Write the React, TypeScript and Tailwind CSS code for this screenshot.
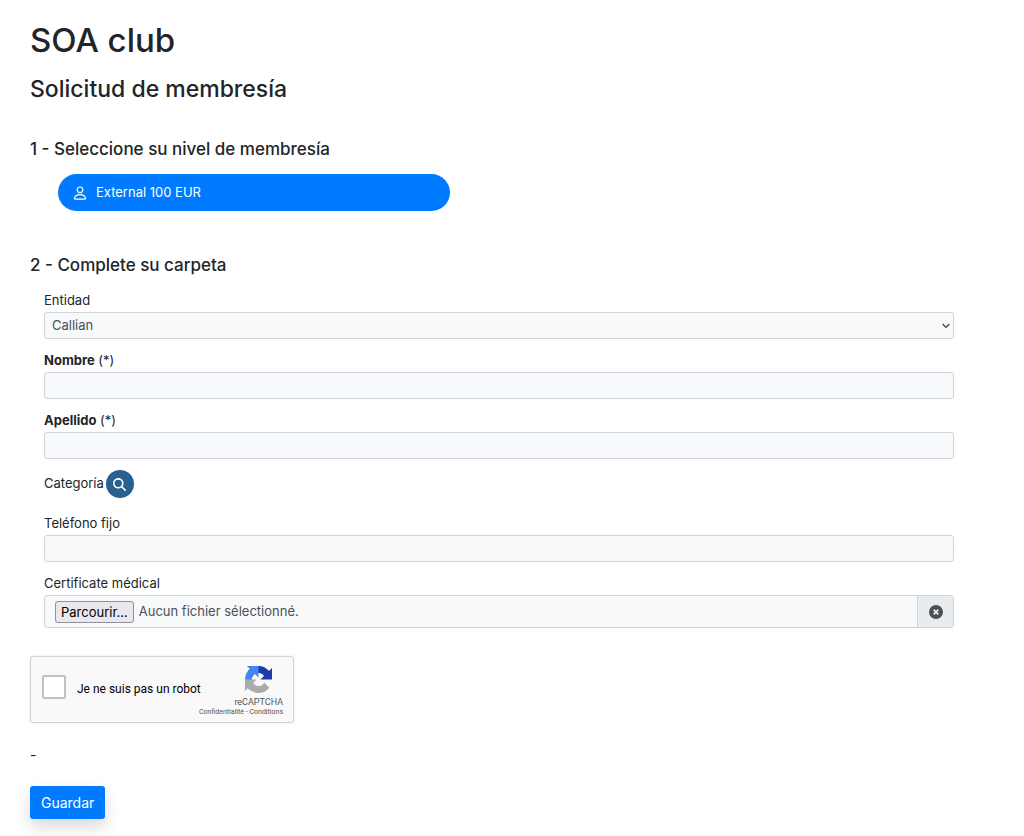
import React, { useRef, useState } from 'react';
import { FaMagnifyingGlass } from 'react-icons/fa6';

interface FieldProps {
  id: string;
  label: string;
  required?: boolean;
  children?: React.ReactNode;
}

const inputClass = 'block w-full h-[27px] px-[7px] rounded-[3px] border border-[#ced4da] bg-[#f8f9fb] text-[13px] text-[#495057]';

const Field: React.FC<FieldProps> = ({ id, label, required, children }) => (
  <div>
    <label htmlFor={id} className="block mb-0.5 text-[13px] leading-5">
      {required ? <><b className="font-bold">{label}</b> (*)</> : label}
    </label>
    {children ?? <input id={id} type="text" required={required} className={inputClass} />}
  </div>
);

const PersonIcon = () => (
  <svg viewBox="0 0 16 16" className="w-4 h-4" fill="none" stroke="currentColor" strokeWidth="1.2" aria-hidden="true">
    <circle cx="8" cy="4.8" r="2.8" />
    <path d="M3.2 14.2h9.6c.6 0 .8-.3.7-.9C13 10.800 11 9.600 8 9.600s-5 1.200-5.500 3.700c-.1.600.1.900.700.900z" />
  </svg>
);

const RecaptchaLogo = () => (
  <svg viewBox="0 0 64 64" className="w-[27px] h-[27px]" aria-hidden="true">
    <path fill="#1c3aa9" d="M64 31.955l-.033-1.37V4.687l-7.16 7.16C50.948 4.674 42.033.093 32.05.093c-10.4 0-19.622 4.96-25.458 12.64l11.736 11.86a15.55 15.55 0 0 1 4.754-5.334c2.05-1.6 4.952-2.906 8.968-2.906.485 0 .86.057 1.135.163 4.976.393 9.288 3.14 11.828 7.124l-8.307 8.307L64 31.953" />
    <path fill="#4285f4" d="M31.862.094l-1.37.033H4.594l7.16 7.16C4.58 13.147 0 22.06 0 32.046c0 10.4 4.96 19.622 12.64 25.458L24.5 45.768a15.55 15.55 0 0 1-5.334-4.754c-1.6-2.05-2.906-4.952-2.906-8.968 0-.485.057-.86.163-1.135.393-4.976 3.14-9.288 7.124-11.828l8.307 8.307L31.86.095" />
    <path fill="#ababab" d="M.001 32.045l.033 1.37v25.898l7.16-7.16c5.86 7.173 14.774 11.754 24.76 11.754 10.4 0 19.622-4.96 25.458-12.64l-11.736-11.86a15.55 15.55 0 0 1-4.754 5.334c-2.05 1.6-4.952 2.906-8.968 2.906-.485 0-.86-.057-1.135-.163-4.976-.393-9.288-3.14-11.828-7.124l8.307-8.307c-10.522.04-22.4.066-27.295-.005" />
  </svg>
);

const Recaptcha = () => (
  <div className="flex items-start w-[264px] h-[67px] pl-[11px] pr-2.5 rounded-[3px] border border-[#d3d3d3] bg-[#f9f9f9] shadow-[0_0_3px_rgba(0,0,0,0.1)] font-[Roboto,sans-serif]">
    <input
      id="robot"
      type="checkbox"
      className="appearance-none shrink-0 w-6 h-6 mt-[18px] rounded-[2px] border-2 border-[#c1c1c1] bg-white checked:bg-[#4285f4]"
    />
    <label htmlFor="robot" className="mt-[23px] ml-[11px] text-xs leading-[18px] text-black whitespace-nowrap">
      Je ne suis pas un robot
    </label>
    <div className="flex-1 w-0 flex flex-col items-end pt-[9px] text-[#555]">
      <div className="flex flex-col items-center">
        <RecaptchaLogo />
        <span className="mt-1 text-[9px] leading-[11px]">reCAPTCHA</span>
      </div>
      <div className="text-[7px] leading-[9px] whitespace-nowrap">
        <a href="#confidentialite">Confidentialité</a> - <a href="#conditions">Conditions</a>
      </div>
    </div>
  </div>
);

const FilePicker = ({ id }: { id: string }) => {
  const ref = useRef<HTMLInputElement>(null);
  const [name, setName] = useState('');

  const clear = () => {
    if (ref.current) ref.current.value = '';
    setName('');
  };

  return (
    <div className="flex h-[33px] overflow-hidden rounded-[3px] border border-[#ced4da] bg-[#f8f9fb]">
      <input id={id} ref={ref} type="file" className="hidden" onChange={e => setName(e.target.files?.[0]?.name ?? '')} />
      <div className="flex-1 flex items-center pl-2.5 text-[13px] text-[#495057]">
        <button
          type="button"
          onClick={() => ref.current?.click()}
          className="h-[22px] px-[5px] mr-[5px] rounded-[3px] border border-[#8f8f9d] bg-[#e9e9ed] leading-5 text-black"
        >
          Parcourir...
        </button>
        <span>{name || 'Aucun fichier sélectionné.'}</span>
      </div>
      <button
        type="button"
        onClick={clear}
        aria-label="Borrar archivo"
        className="w-9 flex items-center justify-center border-l border-[#ced4da] bg-[#e9ecef]"
      >
        <svg viewBox="0 0 14 14" className="w-3.5 h-3.5" aria-hidden="true">
          <circle cx="7" cy="7" r="7" fill="#495057" />
          <path d="M4.7 4.7l4.6 4.6M9.3 4.7l-4.6 4.6" stroke="#e9ecef" strokeWidth="1.8" />
        </svg>
      </button>
    </div>
  );
};

export default function App() {
  return (
    <main className="min-h-screen bg-white pt-[18px] pl-[30px] pr-[70px] pb-4 font-[Inter,sans-serif] text-[#212529]">
      <h1 className="text-[33px] leading-[44px] font-medium">SOA club</h1>
      <h2 className="mt-[11px] text-[23px] leading-8 font-medium">Solicitud de membresía</h2>

      <form onSubmit={e => e.preventDefault()}>
        <h3 className="mt-8 text-[17px] leading-6 font-medium">1 - Seleccione su nivel de membresía</h3>
        <button
          type="button"
          className="mt-[13px] ml-7 flex items-center gap-2 w-full max-w-[392px] h-[37px] px-3.5 rounded-full bg-[#007bff] text-[13px] text-white"
        >
          <PersonIcon />
          External 100 EUR
        </button>

        <h3 className="mt-[42px] text-[17px] leading-6 font-medium">2 - Complete su carpeta</h3>
        <div className="mt-[13px] ml-3.5 flex flex-col gap-[11px]">
          <Field id="entidad" label="Entidad">
            <div className="grid items-center">
              <select id="entidad" className={`${inputClass} appearance-none col-start-1 row-start-1`}>
                <option>Callian</option>
              </select>
              <svg viewBox="0 0 8 6" className="col-start-1 row-start-1 justify-self-end mr-1 w-2 h-1.5 pointer-events-none" aria-hidden="true">
                <path d="M.7 1L4 4.400 7.300 1" fill="none" stroke="#333840" strokeWidth="1.2" />
              </svg>
            </div>
          </Field>
          <Field id="nombre" label="Nombre" required />
          <Field id="apellido" label="Apellido" required />
          <div className="flex items-center gap-0.5 mb-1 text-[13px]">
            <span>Categoría</span>
            <button
              type="button"
              aria-label="Buscar categoría"
              className="w-7 h-7 flex items-center justify-center rounded-full bg-[#286090] text-white"
            >
              <FaMagnifyingGlass size={13} />
            </button>
          </div>
          <Field id="telefono" label="Teléfono fijo" />
          <Field id="certificado" label="Certificate médical">
            <FilePicker id="certificado" />
          </Field>
        </div>

        <div className="mt-7">
          <Recaptcha />
        </div>
        <p className="mt-[22px] text-sm leading-5">-</p>
        <button
          type="submit"
          className="mt-[21px] h-[33px] px-[11px] rounded-[3px] bg-[#007bff] text-sm text-white shadow-[0_8px_16px_rgba(0,0,0,0.15)]"
        >
          Guardar
        </button>
      </form>
    </main>
  );
}
